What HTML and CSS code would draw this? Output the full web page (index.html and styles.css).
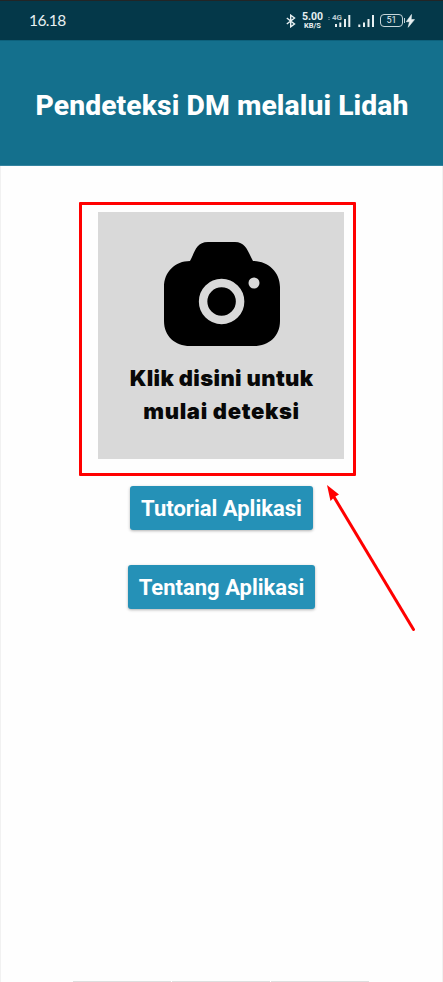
FILE: index.html
```html
<!DOCTYPE html>
<html lang="id">
<head>
<meta charset="utf-8">
<title>Pendeteksi DM melalui Lidah</title>
<link rel="stylesheet" href="styles.css">
</head>
<body>
<div class="screen">
  <div class="status">
    <span class="time">16.18</span>
    <div class="indicators">
      <svg class="bluetooth" width="10" height="14" viewBox="0 0 10 14"><path d="M.8 4 8.500 10 4.700 12.800V1.200L8.500 4 .8 10"/></svg>
      <div class="speed"><span class="rate">5.00</span><span class="unit">KB/S</span></div>
      <div class="network">
        <span class="generation">4G</span>
        <svg class="bars" width="24" height="14" viewBox="0 0 24 14"><path class="faint" d="M1 3h2v1H1zM1 5h2v1H1z"/><path d="M8 10h2v3H8zM12.300 8.500h2V13h-2zM17 5h2v8h-2zM21.300 1h2v12h-2z"/></svg>
      </div>
      <svg class="bars second" width="17" height="14" viewBox="0 0 17 14"><path d="M.3 10.500h2V13h-2zM5 8.500h2V13H5zM9.500 5h2v8h-2zM14 1h2v12h-2z"/></svg>
      <div class="battery">51</div>
      <svg class="bolt" width="9" height="14" viewBox="0 0 9 14"><path d="M5.500.5.3 7.700h3.200L2.200 13.300 8.500 5.600H5.200z"/></svg>
    </div>
  </div>
  <header class="header"><h1>Pendeteksi DM melalui Lidah</h1></header>
  <main class="content">
    <div class="highlight">
      <div class="tile">
        <svg class="camera" width="118" height="106" viewBox="0 0 118 106">
          <path d="M27 20C32 11 33 1 45 1h27c11 0 13 10 18 19 15 0 27 11 27 26v34c0 15-11 25-26 25H27C12 105 1 95 1 80V46C1 31 12 20 27 20Z"/>
          <circle class="lens" cx="58.600" cy="60.500" r="18.500"/>
          <circle class="flash" cx="91" cy="42" r="5.500"/>
        </svg>
        <p class="caption"><span class="line-one">Klik disini untuk</span><br><span class="line-two">mulai deteksi</span></p>
      </div>
    </div>
    <button class="button tutorial">Tutorial Aplikasi</button>
    <button class="button about">Tentang Aplikasi</button>
  </main>
  <svg class="arrow" width="94" height="150" viewBox="0 0 94 150"><path class="shaft" d="M9 11 88.500 143.500"/><path class="head" d="M2-1 14 8.500 9.500 11 5.500 15Z"/></svg>
  <div class="navigation"><i></i><i></i><i></i></div>
</div>
</body>
</html>
```
FILE: styles.css
```css
* { box-sizing: border-box; }
body { margin: 0; background: #fefefe; font-family: Roboto, sans-serif; }
.screen {
  position: relative;
  display: flex;
  flex-direction: column;
  width: 443px;
  height: 982px;
  overflow: hidden;
}
.status {
  display: flex;
  align-items: center;
  justify-content: space-between;
  height: 40px;
  padding: 0 28px 0 29px;
  border-top: 1px solid #222526;
  background: #043849;
  color: #e8f0f2;
}
.time { padding-bottom: 2px; font: 15.5px/20px Lato, sans-serif; letter-spacing: -.6px; }
.indicators { display: flex; align-items: center; height: 16px; }
.bluetooth { fill: none; stroke: #e8f0f2; stroke-width: 1.4; }
.speed {
  display: flex;
  flex-direction: column;
  align-items: center;
  width: 21px;
  margin-left: 6px;
  font-weight: 700;
}
.rate { font-size: 10.5px; line-height: 9px; }
.unit { font-size: 7.500px; line-height: 9px; }
.network { position: relative; width: 24px; height: 14px; margin-left: 4px; }
.generation {
  position: absolute;
  top: 0;
  left: 5px;
  font: 700 8px/8px Roboto, sans-serif;
  color: #bccbd0;
}
.bars, .bolt { display: block; fill: #e8f0f2; }
.faint { fill: #56747f; }
.second { margin-left: 7px; }
.battery {
  position: relative;
  width: 23px;
  height: 13px;
  margin-left: 5px;
  border: 1.5px solid #c8d6da;
  border-radius: 4px;
  font-size: 9px;
  line-height: 11px;
  text-align: center;
}
.battery::after {
  content: "";
  position: absolute;
  top: 3px;
  right: -3px;
  width: 1.5px;
  height: 5px;
  background: #c8d6da;
}
.bolt { margin-left: 3px; stroke: #e8f0f2; stroke-width: .6; }
.header {
  display: flex;
  align-items: center;
  justify-content: center;
  height: 126px;
  padding: 5px 0 0 1px;
  border-top: 1px solid #0d617c;
  border-bottom: 1px solid #3584a0;
  background: #14708d;
}
h1 {
  margin: 0;
  font-size: 28.3px;
  line-height: 34px;
  font-weight: 800;
  letter-spacing: .07px;
  color: #fff;
  white-space: nowrap;
}
.content {
  display: flex;
  flex: 1;
  flex-direction: column;
  align-items: center;
  padding-top: 36px;
  border: solid #f1f1f1;
  border-width: 0 1px;
}
.highlight {
  width: 277px;
  height: 274px;
  margin-right: 8px;
  padding: 7px 0 0 16px;
  border: 3px solid #f00;
  border-radius: 1px;
}
.tile {
  display: flex;
  flex-direction: column;
  align-items: center;
  width: 246px;
  height: 247px;
  padding-top: 29px;
  background: #d9d9d9;
}
.camera { display: block; flex: none; margin-left: 2px; }
.lens { fill: #000; stroke: #d9d9d9; stroke-width: 8.5; }
.flash { fill: #d9d9d9; }
.caption {
  margin: 15px 0 0 1px;
  font: 900 22px/33px Inter, sans-serif;
  letter-spacing: .35px;
  text-align: center;
  white-space: nowrap;
  color: #080808;
}
.line-two { letter-spacing: .65px; }
.button {
  height: 44px;
  padding: 2px 0 0;
  border: 0;
  border-radius: 3px;
  background: #2591b7;
  box-shadow: 0 1px 3px rgba(0, 0, 0, .3);
  color: #fff;
  font: 700 22px/28px Roboto, sans-serif;
  white-space: nowrap;
}
.tutorial { width: 183px; margin-top: 10px; }
.about { width: 187px; margin-top: 35px; }
.arrow { position: absolute; left: 325px; top: 486px; overflow: visible; }
.shaft { fill: none; stroke: #f00; stroke-width: 3; stroke-linecap: round; }
.head { fill: #f00; }
.navigation {
  position: absolute;
  left: 73px;
  bottom: 0;
  display: flex;
  gap: 1px;
}
.navigation i { width: 98px; height: 1px; background: #dedede; }
```
